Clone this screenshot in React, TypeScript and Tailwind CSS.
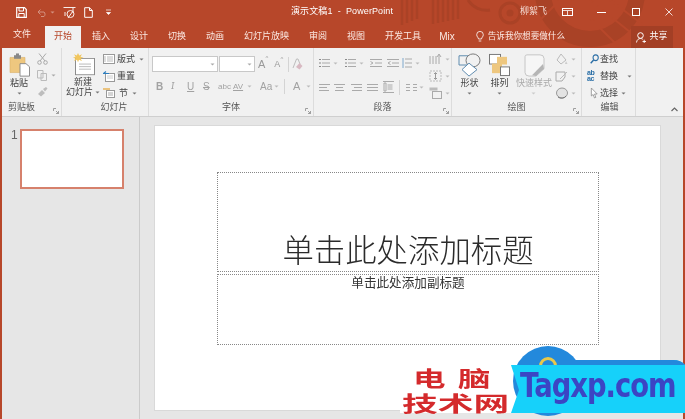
import React from "react";

const Svg = ({ w, h, vw, vh, children, className = "" }: { w: number; h: number; vw?: number; vh?: number; children: React.ReactNode; className?: string }) => (
  <svg width={w} height={h} viewBox={`0 0 ${vw ?? w} ${vh ?? h}`} preserveAspectRatio="none" fill="none" className={`shrink-0 ${className}`}>{children}</svg>
);

const Caret = ({ c = "#777" }: { c?: string }) => (
  <Svg w={5} h={3}><path d="M0.5 0.5H4.5L2.5 2.5Z" fill={c} /></Svg>
);

const Launcher = () => (
  <Svg w={6} h={6}><path d="M0.5 3V0.5H3M3 3L5.5 5.5M5.5 3V5.5H3" stroke="#8a8a8a" strokeWidth="0.8" /></Svg>
);

const Group = ({ w, label, launcher, children, labelClass = "" }: { w: string; label: string; launcher?: boolean; children: React.ReactNode; labelClass?: string }) => (
  <div className={`${w} h-full flex flex-col border-r border-[#dcdcdc] shrink-0`}>
    <div className="flex-1 flex min-h-0">{children}</div>
    <div className={`h-[16px] flex items-center justify-center relative text-[9px] text-[#555] ${labelClass}`}>
      {label}
      {launcher && <span className="absolute right-[2px] bottom-[2px] flex"><Launcher /></span>}
    </div>
  </div>
);

const Big = ({ icon, text, ml, w, dim }: { icon: React.ReactNode; text: React.ReactNode; ml: string; w: string; dim?: boolean }) => (
  <div className={`${ml} ${w} flex flex-col items-center pt-[5px] shrink-0`}>
    <div className="h-[24px] flex items-center">{icon}</div>
    <div className={`text-[9px] leading-[12px] text-center whitespace-nowrap ${dim ? "text-[#aaa]" : "text-[#444]"}`}>{text}</div>
  </div>
);

const ListIcon = () => (
  <Svg w={11} h={10}><path d="M3 1.5H11M3 5H11M3 8.5H11" stroke="#aaa" /><path d="M0 1.5H2M0 5H2M0 8.5H2" stroke="#888" /></Svg>
);
const Align = ({ kind }: { kind: number }) => (
  <Svg w={11} h={9}>
    {kind === 0 && <path d="M0 1.5H11M0 4.5H8M0 7.5H10" stroke="#aaa" />}
    {kind === 1 && <path d="M0 1.5H11M2 4.5H9M1 7.5H10" stroke="#aaa" />}
    {kind === 2 && <path d="M0 1.5H11M3 4.5H11M1 7.5H11" stroke="#aaa" />}
    {kind === 3 && <path d="M0 1.5H11M0 4.5H11M0 7.5H11" stroke="#aaa" />}
  </Svg>
);

export default function App() {
  const tabs: [string, string][] = [
    ["插入", "px-[10px]"], ["设计", "px-[10px]"], ["切换", "px-[10px]"], ["动画", "px-[10px]"],
    ["幻灯片放映", "px-[10px]"], ["审阅", "px-[10px]"], ["视图", "px-[10px]"], ["开发工具", "pl-[10px] pr-[9px]"],
  ];
  return (
    <div className="relative w-[685px] h-[419px] overflow-hidden bg-[#b7472a] flex flex-col font-['Liberation_Sans','Noto_Sans_CJK_SC',sans-serif] blur-[0.4px]">
      {/* decorative title-bar art */}
      <svg width="685" height="48" viewBox="0 0 685 48" className="absolute left-0 top-0">
        <g stroke="#aa4226" strokeWidth="2.4">
          {[402, 407, 412, 417, 433, 438, 443, 448, 453, 458].map((x, i) => (
            <path key={x} d={`M${x} 0V${i < 4 ? 25 - i * 2 : 24 - (i - 4)}`} />
          ))}
        </g>
        <path d="M468 0A22 22 0 0 0 490 10" stroke="#aa4226" strokeWidth="3" fill="none" />
        <circle cx="510" cy="13" r="10" stroke="#aa4226" strokeWidth="3" fill="none" />
        <circle cx="510" cy="13" r="3.5" fill="#aa4226" />
        <circle cx="590" cy="-8" r="47" stroke="#a94226" strokeWidth="16" fill="none" />
        <g stroke="#b7472a" strokeWidth="2">
          <path d="M560 0L540 20M572 0L620 48M590 0L640 40M610 0L650 30" />
        </g>
      </svg>

      {/* title bar */}
      <div className="relative h-[24px] flex items-center text-white shrink-0">
        <div className="flex items-center ml-[16px] w-[275px]">
          <Svg w={11} h={11}><path d="M0.7 0.7H8.5L10.3 2.5V10.3H0.7Z" stroke="#fff" strokeWidth="1.2" /><path d="M3 1V4H7.5V1M2.8 10V6.5H8.2V10" stroke="#fff" /></Svg>
          <Svg w={11} h={9} className="ml-[10px] opacity-40"><path d="M1 4H7A3 3 0 0 1 7 8.5H4M1 4L3.5 1.5M1 4L3.5 6.5" stroke="#fff" /></Svg>
          <span className="ml-[2px] opacity-40 flex"><Caret c="#fff" /></span>
          <Svg w={13} h={13} className="ml-[8px] opacity-90"><path d="M0.5 1.5H12.5M3 1.5H10V7" stroke="#fff" /><circle cx="7.5" cy="8" r="3.5" stroke="#fff" /><path d="M2 6V10M5 12L10 5" stroke="#fff" /></Svg>
          <Svg w={9} h={11} className="ml-[8px]"><path d="M0.7 0.7H5.5L8.3 3.5V10.3H0.7Z M5.5 0.7V3.5H8.3" stroke="#fff" /></Svg>
          <Svg w={5} h={6} className="ml-[13px]"><path d="M0 1H5M0.5 3.5H4.5L2.5 5.5Z" stroke="#fff" strokeWidth="0.7" fill="#fff" /></Svg>
        </div>
        <div className="w-[229px] text-[9px] whitespace-pre tracking-[0.1px]">演示文稿1  -  PowerPoint</div>
        <div className="w-[42px] text-[9px] text-[#f3d9d1]">柳絮飞</div>
        <Svg w={11} h={8}><rect x="0.5" y="0.5" width="10" height="7" stroke="#fff" /><path d="M0.5 2.5H10.5M5.5 3V7.5" stroke="#fff" strokeWidth="0.8" /></Svg>
        <Svg w={9} h={1} className="ml-[24px]"><rect width="9" height="1" fill="#fff" /></Svg>
        <Svg w={8} h={8} className="ml-[26px]"><rect x="0.5" y="0.5" width="7" height="7" stroke="#fff" /></Svg>
        <Svg w={8} h={8} className="ml-[25px]"><path d="M0.5 0.5L7.5 7.5M7.5 0.5L0.5 7.5" stroke="#fff" strokeWidth="0.8" /></Svg>
      </div>

      {/* tabs */}
      <div className="relative h-[24px] flex items-stretch text-[9px] text-[#fbe9e3] shrink-0">
        <div className="ml-[3px] w-[38px] flex items-center justify-center pb-[2px]">文件</div>
        <div className="ml-[4px] mr-[1px] mt-[2px] w-[36px] bg-[#f1f1f1] text-[#b7472a] flex items-center justify-center">开始</div>
        {tabs.map(([t, c]) => (
          <div key={t} className={`${c} flex items-center pt-[1px] whitespace-nowrap`}>{t}</div>
        ))}
        <div className="pl-[9px] pr-[21px] flex items-center pt-[1px] text-[10px]">Mix</div>
        <div className="flex items-center pt-[1px] whitespace-nowrap text-[8.6px]">
          <Svg w={8} h={11} className="mr-[4px]"><path d="M2.5 8C2.5 6.5 0.7 5.8 0.7 3.7A3.3 3.3 0 0 1 7.3 3.7C7.3 5.8 5.5 6.5 5.5 8ZM2.7 10H5.3" stroke="#fff" strokeWidth="0.8" /></Svg>
          告诉我你想要做什么
        </div>
        <div className="ml-auto mr-[12px] mt-[2px] w-[42px] bg-[#a33f25] flex items-center justify-center gap-[3px] text-white">
          <Svg w={10} h={11}><circle cx="4.5" cy="3.5" r="2.8" stroke="#fff" /><path d="M0.5 10.5C0.8 7.8 2.5 6.5 4.5 6.5C5.5 6.5 6 6.8 6.8 7.3M6.5 9.5H10M8.2 7.7V11" stroke="#fff" strokeWidth="0.9" /></Svg>
          <span>共享</span>
        </div>
      </div>

      {/* ribbon */}
      <div className="relative h-[69px] mx-[2px] bg-[#f1f1f1] border-b border-[#cfcfcf] flex shrink-0">
        <Group w="w-[60px]" label="剪贴板" launcher labelClass="pr-[20px]">
          <div className="ml-[6px] w-[22px] flex flex-col items-center pt-[5px]">
            <Svg w={21} h={24} vw={21} vh={27}>
              <path d="M1 5H16V22H1Z" fill="#eec77f" stroke="#d8ad65" strokeWidth="0.6" />
              <rect x="5" y="2.5" width="7" height="4" fill="#888" /><rect x="7" y="0.5" width="3" height="3" fill="#888" />
              <path d="M11 12H17L20.5 15.5V26H11Z" fill="#fff" stroke="#888" />
            </Svg>
            <div className="text-[9px] leading-[12px] text-[#444]">粘贴</div>
            <div className="mt-[3px] flex"><Caret /></div>
          </div>
          <div className="ml-[3px] flex flex-col items-center pt-[5px] gap-[5px]">
            <Svg w={11} h={12}><path d="M2 0.5L8 8M9 0.5L3 8" stroke="#a8a8a8" /><circle cx="2.5" cy="9.5" r="1.8" stroke="#a8a8a8" /><circle cx="8.5" cy="9.5" r="1.8" stroke="#a8a8a8" /></Svg>
            <div className="flex items-center gap-[4px] relative left-[4px]">
              <Svg w={10} h={11}><path d="M0.5 0.5H6V8H0.5ZM4 3.5H9.5V10.5H4Z" stroke="#bbb" fill="#f1f1f1" /></Svg>
              <Caret c="#aaa" />
            </div>
            <Svg w={11} h={11}><path d="M1 8L5 4L8 7L4 10.5ZM6 3L9 1L10.5 2.5L8 5.5" fill="#bdbdbd" /></Svg>
          </div>
        </Group>

        <Group w="w-[87px]" label="幻灯片" labelClass="pl-[18px]">
          <div className="ml-[3px] w-[36px] flex flex-col items-center pt-[5px]">
            <Svg w={22} h={23} vw={22} vh={27} className="ml-[1px]">
              <rect x="2.5" y="6.5" width="19" height="19" fill="#fff" stroke="#8c8c8c" />
              <path d="M6 13H18M6 16H18M6 19H18" stroke="#b7b7b7" />
              <path d="M5 0L6.2 3L9 1.5L7.5 4.5L10.5 5.5L7.5 6.5L9 9.5L6 8L5 11L4 8L1 9.5L2.5 6.5L0 5.5L2.5 4.5L1 1.5L3.8 3Z" fill="#f1c65e" />
            </Svg>
            <div className="text-[9px] leading-[10px] text-[#444] mt-[1px]">新建</div>
            <div className="text-[9px] leading-[10px] text-[#444] whitespace-nowrap flex items-center gap-[2px]">幻灯片<Caret /></div>
          </div>
          <div className="ml-[2px] flex flex-col pt-[5px] gap-[5px] text-[9px] text-[#444] leading-[12px]">
            <div className="flex items-center gap-[2px]"><Svg w={12} h={10}><rect x="0.5" y="0.5" width="11" height="9" fill="#fff" stroke="#999" /><path d="M2 2V8M4 3H10M4 5H10M4 7H10" stroke="#bbb" /></Svg>版式<span className="ml-[2px] flex"><Caret /></span></div>
            <div className="flex items-center gap-[2px]"><Svg w={12} h={11}><rect x="2.5" y="2.5" width="9" height="8" fill="#fff" stroke="#999" /><path d="M0 2.5H6M0.5 2.5L3 0.5" stroke="#2e7fbf" strokeWidth="1.2" /><path d="M4 5H10M4 7H10" stroke="#ccc" /></Svg>重置</div>
            <div className="flex items-center gap-[2px]"><Svg w={12} h={10}><rect x="3.5" y="2.5" width="8" height="7" fill="#fff" stroke="#999" /><path d="M0 1H7" stroke="#e9b863" strokeWidth="1.6" /><path d="M5 5H10M5 7H10" stroke="#aaa" /></Svg><span className="pl-[2px]">节</span><span className="ml-[2px] flex"><Caret /></span></div>
          </div>
        </Group>

        <Group w="w-[165px]" label="字体" launcher>
          <div className="flex flex-col pl-[3px] pt-[8px] w-full">
            <div className="flex items-center">
              <div className="w-[66px] h-[16px] bg-white border border-[#c8c8c8] flex items-center justify-end pr-[2px]"><Caret c="#aaa" /></div>
              <div className="ml-[1px] w-[36px] h-[16px] bg-white border border-[#c8c8c8] flex items-center justify-end pr-[2px]"><Caret c="#aaa" /></div>
              <span className="ml-[3px] text-[11px] text-[#9a9a9a] relative">A<span className="absolute text-[6px] top-[-2px] right-[-3px]">^</span></span>
              <span className="ml-[9px] text-[9px] text-[#9a9a9a] relative">A<span className="absolute text-[6px] top-[-3px] right-[-3px]">^</span></span>
              <div className="ml-[8px] w-px h-[15px] bg-[#d4d4d4]" />
              <Svg w={11} h={12} className="ml-[3px]"><path d="M1 10L4.5 1H6L8 6" stroke="#bdbdbd" /><path d="M4 9L7.5 5L10.5 8L7.5 11.5Z" fill="#d8b9c2" /></Svg>
            </div>
            <div className="flex items-center mt-[5px] text-[#a2a2a2] h-[18px]">
              <span className="ml-[4px] w-[15px] text-[10px] font-bold">B</span>
              <span className="w-[16px] text-[10px] italic font-serif">I</span>
              <span className="w-[16px] text-[10px] underline">U</span>
              <span className="w-[15px] text-[10px] line-through">S</span>
              <span className="w-[15px] text-[8px]">abc</span>
              <span className="w-[14px] text-[8px] underline leading-[9px]">AV</span>
              <Caret c="#bbb" />
              <span className="ml-[8px] w-[14px] text-[10px]">Aa</span>
              <Caret c="#bbb" />
              <div className="ml-[5px] w-px h-[15px] bg-[#d4d4d4]" />
              <span className="ml-[8px] text-[11px] w-[10px]">A</span>
              <span className="ml-[3px] flex"><Caret c="#bbb" /></span>
            </div>
          </div>
        </Group>

        <Group w="w-[138px]" label="段落" launcher>
          <div className="flex flex-col pl-[5px] pt-[8px]">
            <div className="flex items-center h-[14px]">
              <ListIcon /><span className="ml-[3px] flex"><Caret c="#bbb" /></span>
              <span className="ml-[7px]"><ListIcon /></span><span className="ml-[3px] flex"><Caret c="#bbb" /></span>
              <Svg w={12} h={10} className="ml-[6px]"><path d="M0 1.5H12M5 5H12M0 8.5H12M0.5 3.5L3 5L0.5 6.5" stroke="#aaa" /></Svg>
              <Svg w={12} h={10} className="ml-[5px]"><path d="M0 1.5H12M5 5H12M0 8.5H12M3.5 3.5L1 5L3.5 6.5" stroke="#aaa" /></Svg>
              <Svg w={10} h={12} className="ml-[3px]"><path d="M3 2H10M3 6H10M3 10H10" stroke="#aaa" /><path d="M1 1V11" stroke="#7fa8cc" /></Svg>
              <span className="ml-[3px] flex"><Caret c="#bbb" /></span>
            </div>
            <div className="flex items-center h-[14px] mt-[10px]">
              <Align kind={0} /><span className="ml-[4px]"><Align kind={1} /></span><span className="ml-[6px]"><Align kind={2} /></span><span className="ml-[5px]"><Align kind={3} /></span>
              <Svg w={11} h={12} className="ml-[5px]"><path d="M0 0.5H11M0 11.5H11M1 2V10H3V2ZM4.5 4H9.5M4.5 6H9.5M4.5 8H9.5" stroke="#aaa" /></Svg>
              <div className="ml-[5px] w-px h-[15px] bg-[#d4d4d4]" />
              <Svg w={11} h={9} className="ml-[6px]"><path d="M0 1.5H4M0 4.5H4M0 7.5H4M7 1.5H11M7 4.5H11M7 7.5H11" stroke="#aaa" /></Svg>
              <span className="ml-[2px] flex"><Caret c="#bbb" /></span>
            </div>
          </div>
          <div className="ml-[5px] flex flex-col pt-[5px] gap-[5px]">
            <div className="flex items-center gap-[3px]"><Svg w={13} h={12}><path d="M1 3V11M4 3V11M7 3V11" stroke="#aaa" /><path d="M10 11V2M8 4L10 1L12 4" stroke="#aaa" /></Svg><Caret c="#bbb" /></div>
            <div className="flex items-center gap-[3px]"><Svg w={13} h={12}><path d="M1 1H12V11H1Z" stroke="#bbb" strokeDasharray="2 1" /><path d="M6.5 3V9M5 4L6.5 2.5L8 4M5 8L6.5 9.5L8 8" stroke="#999" /></Svg><Caret c="#bbb" /></div>
            <div className="flex items-center gap-[3px]"><Svg w={13} h={12}><rect x="0.5" y="0.5" width="8" height="3" fill="#bbb" /><rect x="3.5" y="4.5" width="9" height="7" stroke="#aaa" /></Svg><Caret c="#bbb" /></div>
          </div>
        </Group>

        <Group w="w-[130px]" label="绘图" launcher>
          <Big ml="ml-[5px]" w="w-[25px]" text={<>形状<div className="flex justify-center mt-[3px]"><Caret /></div></>} icon={
            <Svg w={23} h={24} vw={23} vh={26}><path d="M1 3H13V13H1Z" fill="#f1f1f1" stroke="#5b88ad" /><circle cx="15" cy="8" r="7" fill="#f1f1f1" stroke="#777" /><path d="M11 11L19 18L11 25L4 18Z" fill="#fff" stroke="#5b88ad" /></Svg>
          } />
          <Big ml="ml-[5px]" w="w-[25px]" text={<>排列<div className="flex justify-center mt-[3px]"><Caret /></div></>} icon={
            <Svg w={21} h={24} vw={21} vh={25}><rect x="0.5" y="1.5" width="11" height="10" fill="#fff" stroke="#777" /><rect x="8" y="4" width="10" height="8" fill="#eec77f" /><rect x="3" y="11" width="10" height="10" fill="#eec77f" /><rect x="11.5" y="14.5" width="9" height="9" fill="#fff" stroke="#777" /></Svg>
          } />
          <Big ml="ml-[3px]" w="w-[38px]" dim text={<>快速样式<div className="flex justify-center mt-[3px]"><Caret c="#ccc" /></div></>} icon={
            <Svg w={22} h={24} vw={22} vh={26}><path d="M4 2H17Q21 2 21 6V17L13 25H6Q2 25 2 21V4Q2 2 4 2Z" fill="#f6f6f6" stroke="#c4c4c4" /><path d="M9 24L20 12L21 17L13 25Z" fill="#b5b5b5" /></Svg>
          } />
          <div className="ml-[2px] flex flex-col pt-[5px] gap-[5px]">
            <div className="flex items-center gap-[3px]"><Svg w={13} h={12}><path d="M6 1L11 7L6 11L2 7Z" stroke="#bbb" /><path d="M11 8L12.5 11H10Z" fill="#ccc" /></Svg><Caret c="#bbb" /></div>
            <div className="flex items-center gap-[3px]"><Svg w={13} h={12}><path d="M1 2H10V7L7 11H1Z" stroke="#aaa" /><path d="M5 9L12 2" stroke="#bbb" /></Svg><Caret c="#bbb" /></div>
            <div className="flex items-center gap-[3px]"><Svg w={13} h={12}><ellipse cx="7" cy="6" rx="5.5" ry="5" fill="#e3e3e3" stroke="#999" /><path d="M3 10A5 4 0 0 0 11 9" stroke="#777" /></Svg><Caret c="#bbb" /></div>
          </div>
        </Group>

        <Group w="w-[54px]" label="编辑" labelClass="pl-[2px]">
          <div className="pl-[5px] pt-[5px] flex flex-col gap-[5px] text-[9px] leading-[12px] text-[#444]">
            <div className="flex items-center gap-[1px] pl-[3px]"><Svg w={9} h={10} vw={10} vh={10}><circle cx="6.3" cy="3.7" r="2.9" stroke="#2a6ea6" strokeWidth="1.2" /><path d="M4 6L0.8 9.2" stroke="#2a6ea6" strokeWidth="1.6" /></Svg>查找</div>
            <div className="flex items-center gap-[2px] whitespace-nowrap"><span className="w-[11px] text-[7px] leading-[6px] text-[#2a6ea6] font-bold tracking-[-0.3px]">ab<br />ac</span>替换<span className="ml-[7px] flex"><Caret /></span></div>
            <div className="flex items-center gap-[1px] whitespace-nowrap pl-[3px]"><Svg w={9} h={12} vw={10} vh={12}><path d="M1.5 1V9L3.5 7.5L5 11L6.5 10.3L5 7H8Z" fill="#fff" stroke="#888" strokeWidth="0.8" /></Svg>选择<span className="ml-[2px] flex"><Caret /></span></div>
          </div>
        </Group>

        <div className="flex-1 relative">
          <Svg w={7} h={5} className="absolute right-[5px] bottom-[4px]"><path d="M0.5 4L3.5 1L6.5 4" stroke="#666" strokeWidth="1.2" /></Svg>
        </div>
      </div>

      {/* work area */}
      <div className="flex-1 mx-[2px] bg-[#e6e6e6] flex min-h-0">
        <div className="w-[138px] border-r border-[#cbcbcb] flex items-start pt-[12px] shrink-0">
          <span className="ml-[9px] w-[9px] text-[12px] leading-[12px] text-[#666]">1</span>
          <div className="w-[104px] h-[60px] bg-white border-[2px] border-[#d6816c]" />
        </div>
        <div className="flex-1 pl-[14px] pt-[8px]">
          <div className="w-[507px] h-[286px] bg-white border border-[#d9d9d9] pl-[62px] pt-[46px]">
            <div className="w-[382px] h-[100px] border border-dotted border-[#888] flex items-end justify-center text-[31.4px] leading-[38px] font-light text-[#2b2b2b] whitespace-nowrap">
              单击此处添加标题
            </div>
            <div className="mt-[2px] w-[382px] h-[71px] border border-dotted border-[#888] flex justify-center text-[12.6px] leading-[16px] text-[#333] whitespace-nowrap">
              单击此处添加副标题
            </div>
          </div>
        </div>
      </div>

      {/* watermark overlay */}
      <div className="absolute left-[513px] top-[346px] w-[70px] h-[70px] rounded-full bg-[#2389dc]" />
      <div className="absolute left-[539px] top-[357px] w-[18px] h-[18px] rounded-full border-[3px] border-[#e8c84a]" />
      <div className="absolute left-[400px] top-[360px] w-[112px] h-[53px] bg-white" />
      <div className="absolute left-[413px] top-[366px] flex gap-[8px] text-[21px] leading-[22px] font-bold text-[#d42a2c] scale-x-[1.55] origin-left font-['Noto_Sans_CJK_SC',sans-serif]">
        <span>电</span><span>脑</span>
      </div>
      <div className="absolute left-[402px] top-[391px] text-[21px] leading-[22px] font-bold text-[#d42a2c] scale-x-[1.7] origin-left whitespace-nowrap font-['Noto_Sans_CJK_SC',sans-serif]">
        技术网
      </div>
      <svg width="174" height="54" viewBox="0 0 174 54" className="absolute left-[511px] top-[360px]">
        <path d="M0 5L8 30L0 53H174V5Q170 0 162 0H62V5Z" fill="#16d1fa" />
        <path d="M62 0H162Q170 0 174 5H62Z" fill="#2389dc" />
      </svg>
      <div className="absolute left-[520px] top-[366px] text-[33px] leading-[40px] font-bold text-[#3b45c4] font-['DejaVu_Sans',sans-serif] tracking-[-1.2px] whitespace-nowrap scale-x-[0.83] origin-left">
        Tagxp.com
      </div>
    </div>
  );
}
